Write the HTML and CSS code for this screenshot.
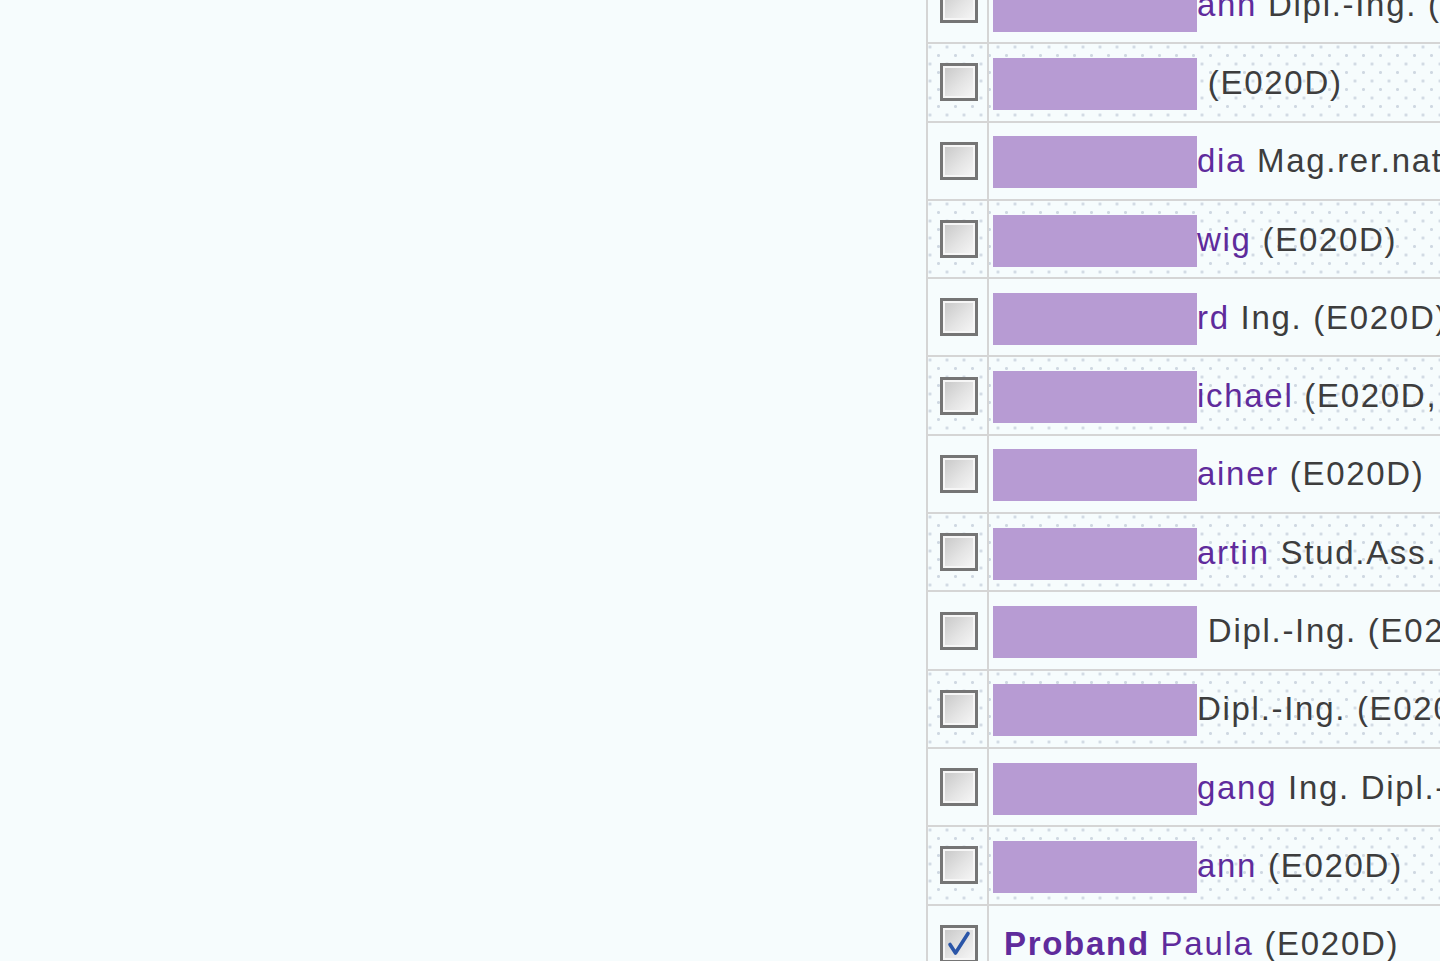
FILE: index.html
```html
<!DOCTYPE html>
<html lang="de">
<head>
<meta charset="utf-8">
<title>Teilnehmer</title>
<link rel="stylesheet" href="styles.css">
</head>
<body>
<div class="page">
  <div class="list">
    <div class="row">
      <div class="check"><span class="cb"></span></div>
      <div class="name"><span class="redact"></span><span class="txt"><span class="link">ann</span> Dipl.-Ing. (E020D)</span></div>
    </div>
    <div class="row dot">
      <div class="check"><span class="cb"></span></div>
      <div class="name"><span class="redact"></span><span class="txt"> (E020D)</span></div>
    </div>
    <div class="row">
      <div class="check"><span class="cb"></span></div>
      <div class="name"><span class="redact"></span><span class="txt"><span class="link">dia</span> Mag.rer.nat. (E020D)</span></div>
    </div>
    <div class="row dot">
      <div class="check"><span class="cb"></span></div>
      <div class="name"><span class="redact"></span><span class="txt"><span class="link">wig</span> (E020D)</span></div>
    </div>
    <div class="row">
      <div class="check"><span class="cb"></span></div>
      <div class="name"><span class="redact"></span><span class="txt"><span class="link">rd</span> Ing. (E020D)</span></div>
    </div>
    <div class="row dot">
      <div class="check"><span class="cb"></span></div>
      <div class="name"><span class="redact"></span><span class="txt"><span class="link">ichael</span> (E020D, E020)</span></div>
    </div>
    <div class="row">
      <div class="check"><span class="cb"></span></div>
      <div class="name"><span class="redact"></span><span class="txt"><span class="link">ainer</span> (E020D)</span></div>
    </div>
    <div class="row dot">
      <div class="check"><span class="cb"></span></div>
      <div class="name"><span class="redact"></span><span class="txt"><span class="link">artin</span> Stud.Ass. (E020D)</span></div>
    </div>
    <div class="row">
      <div class="check"><span class="cb"></span></div>
      <div class="name"><span class="redact"></span><span class="txt"> Dipl.-Ing. (E020D)</span></div>
    </div>
    <div class="row dot">
      <div class="check"><span class="cb"></span></div>
      <div class="name"><span class="redact"></span><span class="txt">Dipl.-Ing. (E020D)</span></div>
    </div>
    <div class="row">
      <div class="check"><span class="cb"></span></div>
      <div class="name"><span class="redact"></span><span class="txt"><span class="link">gang</span> Ing. Dipl.-Ing. (E020D)</span></div>
    </div>
    <div class="row dot">
      <div class="check"><span class="cb"></span></div>
      <div class="name"><span class="redact"></span><span class="txt"><span class="link">ann</span> (E020D)</span></div>
    </div>
    <div class="row">
      <div class="check"><span class="cb checked"><svg class="tick" viewBox="0 0 32 32" width="32" height="32"><path d="M7 16.5 L12.5 25 L25 5.5" fill="none" stroke="#2b56a8" stroke-width="3.6" stroke-linecap="round" stroke-linejoin="round"/></svg></span></div>
      <div class="name"><span class="txt"><span class="link strong">Proband</span><span class="link"> Paula</span> (E020D)</span></div>
    </div>
  </div>
</div>
</body>
</html>
```

FILE: styles.css
```css
html, body {
  margin: 0;
  padding: 0;
  overflow: hidden;
  background: #f6fcfd;
}

.page {
  height: 961px;
  overflow: hidden;
}

.list {
  margin-left: 926px;
  margin-top: -34px;
  width: 512px;
  border-left: 2px solid #d5d5d5;
  overflow: hidden;
  font-family: "Liberation Sans", Arial, sans-serif;
  font-size: 33px;
  letter-spacing: 1.7px;
  color: #3d3d3d;
}

.row {
  display: grid;
  grid-template-columns: 61px minmax(0, 1fr);
  height: 78.3px;
  box-sizing: border-box;
  border-bottom: 2px solid #d5d5d5;
}

.row.dot {
  background-image:
    radial-gradient(circle, #cfd8e2 1.2px, transparent 1.8px),
    radial-gradient(circle, #cfd8e2 1.2px, transparent 1.8px);
  background-size: 17px 17px, 17px 17px;
  background-position: 2px 3px, 10.5px 11.5px;
}

.check {
  border-right: 2px solid #d5d5d5;
  display: flex;
  align-items: center;
  padding-left: 12px;
}

.cb {
  display: block;
  width: 38px;
  height: 38px;
  box-sizing: border-box;
  border: 3px solid #757575;
  box-shadow: inset 0 0 0 2px #f6f6f6;
  background: linear-gradient(135deg, #c6c6c6 0%, #e4e4e4 55%, #f8f8f8 100%);
  position: relative;
}

.tick {
  position: absolute;
  left: 0;
  top: 0;
}

.name {
  display: flex;
  align-items: center;
  padding-left: 15px;
  white-space: nowrap;
  overflow: hidden;
}

.redact {
  flex: none;
  display: block;
  width: 204px;
  height: 52px;
  margin-left: -11px;
  margin-top: 3px;
  background: #b79bd3;
}

.txt {
  flex: none;
  line-height: 33px;
  white-space: pre;
}

.link {
  color: #5f2b9c;
}

.strong {
  font-weight: bold;
}
```
